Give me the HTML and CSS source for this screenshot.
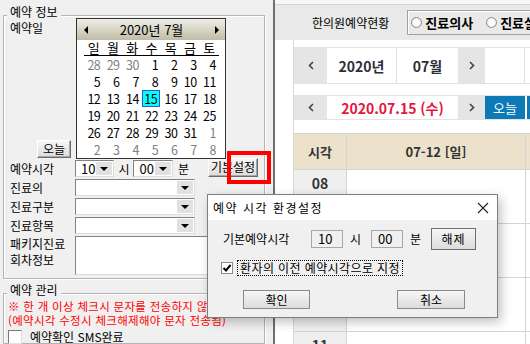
FILE: index.html
```html
<!DOCTYPE html>
<html lang="ko">
<head>
    <meta charset="UTF-8">
    <title>예약 등록</title>
    <link rel="stylesheet" href="styles.css">
</head>
<body>
    <div class="app">
        <div class="left">
            <div class="group info">
                <span class="group-title">예약 정보</span>
                <div class="row date-row"><label>예약일</label></div>
                <button class="btn today">오늘</button>
                <div class="row">
                    <label>예약시각</label>
                    <div class="spin"><span class="val">10</span><span class="dd"><i></i></span></div>
                    <span class="unit">시</span>
                    <div class="spin"><span class="val">00</span><span class="dd"><i></i></span></div>
                    <span class="unit min">분</span>
                    <button class="btn preset">기본설정</button>
                </div>
                <div class="row"><label>진료의</label><div class="combo"><span class="dd"><i></i></span></div></div>
                <div class="row"><label>진료구분</label><div class="combo"><span class="dd"><i></i></span></div></div>
                <div class="row"><label>진료항목</label><div class="combo"><span class="dd"><i></i></span></div></div>
                <div class="row memo-row"><label>패키지진료<br>회차정보</label><div class="memo"></div></div>
            </div>

            <div class="group manage">
                <span class="group-title">예약 관리</span>
                <p class="warn">※ 한 개 이상 체크시 문자를 전송하지 않음<br>(예약시각 수정시 체크해제해야 문자 전송됨)</p>
                <div class="check-row"><span class="checkbox"></span>예약확인 SMS완료</div>
            </div>

            <!-- date picker dropdown -->
            <div class="calendar">
                <div class="cal-head">
                    <span class="tri left-tri"></span>
                    <span>2020년 7월</span>
                    <span class="tri right-tri"></span>
                </div>
                <div class="cal-days">
                    <span>일</span><span>월</span><span>화</span><span>수</span><span>목</span><span>금</span><span>토</span>
                </div>
                <div class="cal-dates">
                    <span class="other">28</span><span class="other">29</span><span class="other">30</span><span>1</span><span>2</span><span>3</span><span>4</span>
                    <span>5</span><span>6</span><span>7</span><span>8</span><span>9</span><span>10</span><span>11</span>
                    <span>12</span><span>13</span><span>14</span><span class="sel">15</span><span>16</span><span>17</span><span>18</span>
                    <span>19</span><span>20</span><span>21</span><span>22</span><span>23</span><span>24</span><span>25</span>
                    <span>26</span><span>27</span><span>28</span><span>29</span><span>30</span><span>31</span><span class="other">1</span>
                    <span class="other">2</span><span class="other">3</span><span class="other">4</span><span class="other">5</span><span class="other">6</span><span class="other">7</span><span class="other">8</span>
                </div>
            </div>

            <div class="highlight"></div>
        </div>

        <div class="divider"></div>

        <div class="right">
            <div class="topbar">
                <span class="top-title">한의원예약현황</span>
                <div class="radio-group">
                    <span class="radio"></span><b>진료의사</b>
                    <span class="radio second"></span><b>진료실</b>
                </div>
            </div>
            <div class="main">
                <div class="gutter"></div>
                <div class="content">
                    <div class="nav nav-month">
                        <span class="nav-arrow prev"><svg width="6" height="9" viewBox="0 0 6 9"><polyline points="5,1 1.5,4.5 5,8" fill="none" stroke="#444" stroke-width="1.6"/></svg></span>
                        <span class="nav-cell year">2020년</span>
                        <span class="nav-cell month">07월</span>
                        <span class="nav-arrow next"><svg width="6" height="9" viewBox="0 0 6 9"><polyline points="1,1 4.5,4.5 1,8" fill="none" stroke="#444" stroke-width="1.6"/></svg></span>
                        <span class="nav-cell blank"></span>
                        <span class="nav-cell rest"></span>
                    </div>
                    <div class="nav nav-day">
                        <span class="nav-arrow prev"><svg width="6" height="9" viewBox="0 0 6 9"><polyline points="5,1 1.5,4.5 5,8" fill="none" stroke="#444" stroke-width="1.6"/></svg></span>
                        <span class="nav-cell day">2020.07.15 (수)</span>
                        <span class="nav-arrow next"><svg width="6" height="9" viewBox="0 0 6 9"><polyline points="1,1 4.5,4.5 1,8" fill="none" stroke="#444" stroke-width="1.6"/></svg></span>
                        <span class="today-btn">오늘</span>
                        <span class="today-btn rest"></span>
                    </div>
                    <div class="schedule">
                        <div class="th">시각</div>
                        <div class="th">07-12 [일]</div>
                        <div class="th"></div>
                        <div class="time">08</div><div class="slot"></div><div class="slot"></div>
                        <div class="time">09</div><div class="slot"></div><div class="slot"></div>
                        <div class="time">10</div><div class="slot"></div><div class="slot"></div>
                        <div class="time">11</div><div class="slot"></div><div class="slot"></div>
                    </div>
                </div>
            </div>
        </div>

        <!-- modal -->
        <div class="dialog">
            <div class="dlg-title">
                <span>예약 시각 환경설정</span>
                <svg class="close" width="12" height="12" viewBox="0 0 12 12"><path d="M1 1L11 11M11 1L1 11" stroke="#222" stroke-width="1.1"/></svg>
            </div>
            <div class="dlg-body">
                <div class="dlg-row">
                    <span class="dlg-label">기본예약시각</span>
                    <span class="dlg-input">10</span>
                    <span class="dlg-unit">시</span>
                    <span class="dlg-input">00</span>
                    <span class="dlg-unit">분</span>
                    <button class="btn clear">해제</button>
                </div>
                <div class="dlg-row check">
                    <span class="dlg-check"><svg width="10" height="10" viewBox="0 0 10 10"><path d="M1.5 5L4 7.5L8.5 2" fill="none" stroke="#000" stroke-width="2"/></svg></span>
                    <span class="focus-label">환자의 이전 예약시각으로 지정</span>
                </div>
                <div class="dlg-row buttons">
                    <button class="btn ok">확인</button>
                    <button class="btn cancel">취소</button>
                </div>
            </div>
        </div>
    </div>
</body>
</html>
```

FILE: styles.css
```css
* {
    margin: 0;
    padding: 0;
    box-sizing: border-box;
}

html {
    overflow: hidden;
}

body {
    width: 530px;
    height: 344px;
    overflow: hidden;
    font-family: "Noto Sans CJK KR", "Noto Sans", sans-serif;
    font-size: 12px;
    line-height: 14px;
    color: #000;
    background: #f0f0f0;
}

.app {
    display: flex;
    height: 344px;
    overflow: hidden;
    position: relative;
}

/* left form */
.left {
    width: 273px;
    flex: none;
    position: relative;
    padding-left: 3px;
    background: #f0f0f0;
}

.group {
    width: 262px;
    border: 1px solid #b4b4b4;
    box-shadow: inset 1px 1px #fff, 1px 1px #fff;
    padding: 0 6px;
}

.group.info {
    margin-top: 15px;
    height: 264px;
}

.group-title {
    display: block;
    width: max-content;
    margin: -11px 0 0 -3px;
    padding: 0 3px;
    background: #f0f0f0;
}

.row {
    display: flex;
    align-items: center;
    height: 17px;
    margin-top: 2px;
}

.row label {
    width: 65px;
    flex: none;
}

.date-row {
    margin-top: 2px;
    height: 14px;
}

.btn {
    font-family: inherit;
    font-size: 12px;
    line-height: 14px;
    color: #000;
    background: linear-gradient(#f6f6f6, #dcdcdc);
    border: 1px solid;
    border-color: #fff #6a6a6a #6a6a6a #fff;
    box-shadow: inset -1px -1px #a8a8a8;
}

.btn.today {
    display: block;
    margin: 105px 0 0 27px;
    width: 34px;
    height: 18px;
}

.spin, .combo, .memo {
    display: flex;
    background: #fff;
    border: 1px solid;
    border-color: #828282 #dcdcdc #dcdcdc #828282;
}

.spin {
    width: 40px;
    height: 17px;
}

.spin .val {
    flex: 1;
    padding-left: 5px;
    font-size: 13px;
    line-height: 15px;
}

.dd {
    width: 16px;
    margin: 1px;
    background: #e1e1e1;
    display: flex;
    align-items: center;
    justify-content: center;
}

.dd i {
    border-left: 4px solid transparent;
    border-right: 4px solid transparent;
    border-top: 4px solid #000;
}

.unit {
    margin: 0 4px 0 4px;
}

.unit.min {
    margin-left: 5px;
}

.btn.preset {
    margin: -3px 0 0 15px;
    width: 56px;
    height: 19px;
    padding: 0;
}

.combo {
    width: 120px;
    height: 17px;
    justify-content: flex-end;
}

.memo-row {
    height: 39px;
    align-items: flex-start;
}

.memo-row label {
    line-height: 16px;
}

.memo {
    width: 188px;
    height: 39px;
}

.group.manage {
    margin-top: 14px;
    height: 51px;
    padding-left: 4px;
}

.manage .group-title {
    margin-left: -1px;
}

.warn {
    margin-top: 2px;
    color: #ff0000;
    font-size: 11.5px;
    white-space: nowrap;
    letter-spacing: 0.3px;
}

.check-row {
    display: flex;
    align-items: center;
    margin-top: 3px;
    white-space: nowrap;
}

.checkbox {
    width: 14px;
    height: 14px;
    margin-right: 8px;
    background: #fff;
    border: 1px solid;
    border-color: #7a7a7a #e0e0e0 #e0e0e0 #7a7a7a;
}

/* calendar dropdown */
.calendar {
    position: absolute;
    left: 76px;
    top: 18px;
    width: 150px;
    height: 141px;
    overflow: hidden;
    background: #fff;
    border: 1px solid #333;
}

.cal-head {
    height: 21px;
    display: flex;
    align-items: center;
    justify-content: space-between;
    padding: 0 6px 0 7px;
    font-size: 13px;
    background: linear-gradient(#efeee6, #bfbda6);
}

.tri {
    border-top: 4px solid transparent;
    border-bottom: 4px solid transparent;
}

.left-tri {
    border-right: 4px solid #000;
}

.right-tri {
    border-left: 4px solid #000;
}

.cal-days, .cal-dates {
    display: grid;
    grid-template-columns: repeat(7, 1fr);
    margin: 0 6px 0 7px;
}

.cal-days {
    height: 16px;
    padding-top: 1px;
    border-bottom: 1px solid #000;
    font-size: 13px;
    text-align: center;
}

.cal-dates {
    grid-auto-rows: 17px;
    font-size: 12.5px;
    line-height: 17px;
    text-align: right;
    letter-spacing: -0.5px;
}

.cal-dates span {
    padding-right: 3px;
}

.cal-dates .other {
    color: #808080;
}

.cal-dates .sel {
    background: #00ffff;
    border: 1px solid #2a5fc8;
    margin-right: 1px;
    padding-right: 2px;
    line-height: 15px;
}

.highlight {
    position: absolute;
    left: 227px;
    top: 151px;
    width: 44px;
    height: 33px;
    border: 4px solid #ff0000;
}

.divider {
    width: 2px;
    flex: none;
    background: #6f6f6f;
}

/* right schedule */
.right {
    flex: 1;
    display: flex;
    flex-direction: column;
    overflow: hidden;
    background: #f7f7f7;
}

.topbar {
    margin-top: 4px;
    height: 36px;
    flex: none;
    border-top: 1px solid #d4d4d4;
    background: #e9e9e9;
    display: flex;
    align-items: center;
    padding-left: 37px;
}

.top-title {
    white-space: nowrap;
}

.radio-group {
    display: flex;
    align-items: center;
    flex: none;
    margin-left: 18px;
    width: 160px;
    height: 25px;
    padding-left: 3px;
    border: 1px solid #a0a0a0;
    box-shadow: inset 1px 1px #fff;
    white-space: nowrap;
}

.radio {
    width: 11px;
    height: 11px;
    border-radius: 50%;
    border: 1px solid #8c8c8c;
    background: radial-gradient(#fff 40%, #d8d8d8);
}

.radio.second {
    margin-left: 13px;
}

.radio-group b {
    margin-left: 3px;
    font-size: 13px;
}

.main {
    flex: 1;
    min-height: 0;
    display: flex;
    overflow: hidden;
    background: #fff;
}

.gutter {
    width: 19px;
    flex: none;
    border-right: 1px solid #d8d8d8;
}

.content {
    flex: 1;
    padding-top: 7px;
}

.nav {
    display: flex;
    border-top: 1px solid #e2e2e2;
    border-bottom: 1px solid #e2e2e2;
    white-space: nowrap;
}

.nav-month {
    height: 37px;
}

.nav-day {
    height: 25px;
    margin-top: 11px;
}

.nav-arrow {
    display: flex;
    align-items: center;
    justify-content: center;
    background: #e5e5e5;
    flex: none;
}

.nav-arrow.prev {
    width: 33px;
}

.nav-arrow.next {
    width: 27px;
}

.nav-cell {
    display: flex;
    align-items: center;
    justify-content: center;
    flex: none;
    font-size: 14px;
    font-weight: bold;
    color: #2e2e3a;
}

.nav-cell.year {
    width: 70px;
    border-right: 1px solid #e0e0e0;
}

.nav-cell.month {
    width: 61px;
}

.nav-cell.blank {
    width: 40px;
    border-right: 1px solid #e0e0e0;
}

.nav-cell.rest {
    flex: 1;
}

.nav-cell.day {
    width: 131px;
    color: #e3163d;
}

.today-btn {
    width: 40px;
    flex: none;
    display: flex;
    align-items: center;
    justify-content: center;
    background: #0b7ab6;
    color: #fff;
    font-size: 13px;
}

.today-btn.rest {
    flex: 1;
    margin-left: 2px;
}

.schedule {
    display: grid;
    grid-template-columns: 52px 178px 1fr;
    grid-template-rows: 35px repeat(4, 53px);
    gap: 1px;
    margin-top: 13px;
    border-top: 1px solid #d4d4d4;
    background: #d4d4d4;
}

.th {
    background: #ece2cb;
    display: flex;
    align-items: center;
    justify-content: center;
    font-size: 13px;
    font-weight: bold;
    color: #333;
}

.time {
    background: #efefef;
    text-align: center;
    padding-top: 4px;
    font-size: 14px;
    line-height: 18px;
    font-weight: bold;
    color: #333;
}

.slot {
    background: #fff;
}

/* settings dialog */
.dialog {
    position: absolute;
    left: 207px;
    top: 194px;
    width: 291px;
    height: 124px;
    background: #f0f0f0;
    border: 1px solid #7e7e7e;
    box-shadow: 3px 4px 10px rgba(0, 0, 0, 0.25);
}

.dlg-title {
    height: 25px;
    background: #fff;
    display: flex;
    align-items: center;
    justify-content: space-between;
    padding: 0 8px 0 5px;
    letter-spacing: 1.5px;
}

.dlg-body {
    padding: 8px 0 0 15px;
}

.dlg-row {
    display: flex;
    align-items: center;
    white-space: nowrap;
}

.dlg-row:first-child {
    height: 22px;
}

.dlg-label {
    width: 88px;
}

.dlg-input {
    width: 32px;
    height: 18px;
    padding-left: 6px;
    font-size: 13px;
    line-height: 16px;
    border: 1px solid #a8a8a8;
    background: #f0f0f0;
}

.dlg-unit {
    margin: 0 10px 0 7px;
}

.btn.clear {
    width: 45px;
    height: 22px;
    border: 1px solid #707070;
    box-shadow: none;
    letter-spacing: 1px;
}

.dlg-row.check {
    margin-top: 10px;
    height: 16px;
}

.dlg-check {
    width: 12px;
    height: 12px;
    margin-left: -2px;
    display: flex;
    align-items: center;
    justify-content: center;
    background: #fff;
    border: 1px solid #8a8a8a;
}

.focus-label {
    margin-left: 4px;
    padding: 0 2px;
    height: 16px;
    line-height: 14px;
    border: 1px dotted #000;
    letter-spacing: 0.4px;
}

.dlg-row.buttons {
    margin-top: 14px;
}

.btn.ok, .btn.cancel {
    width: 67px;
    height: 19px;
    border: 1px solid #8a8a8a;
    box-shadow: none;
}

.btn.ok {
    margin-left: 20px;
}

.btn.cancel {
    margin-left: 87px;
    width: 68px;
}
```
